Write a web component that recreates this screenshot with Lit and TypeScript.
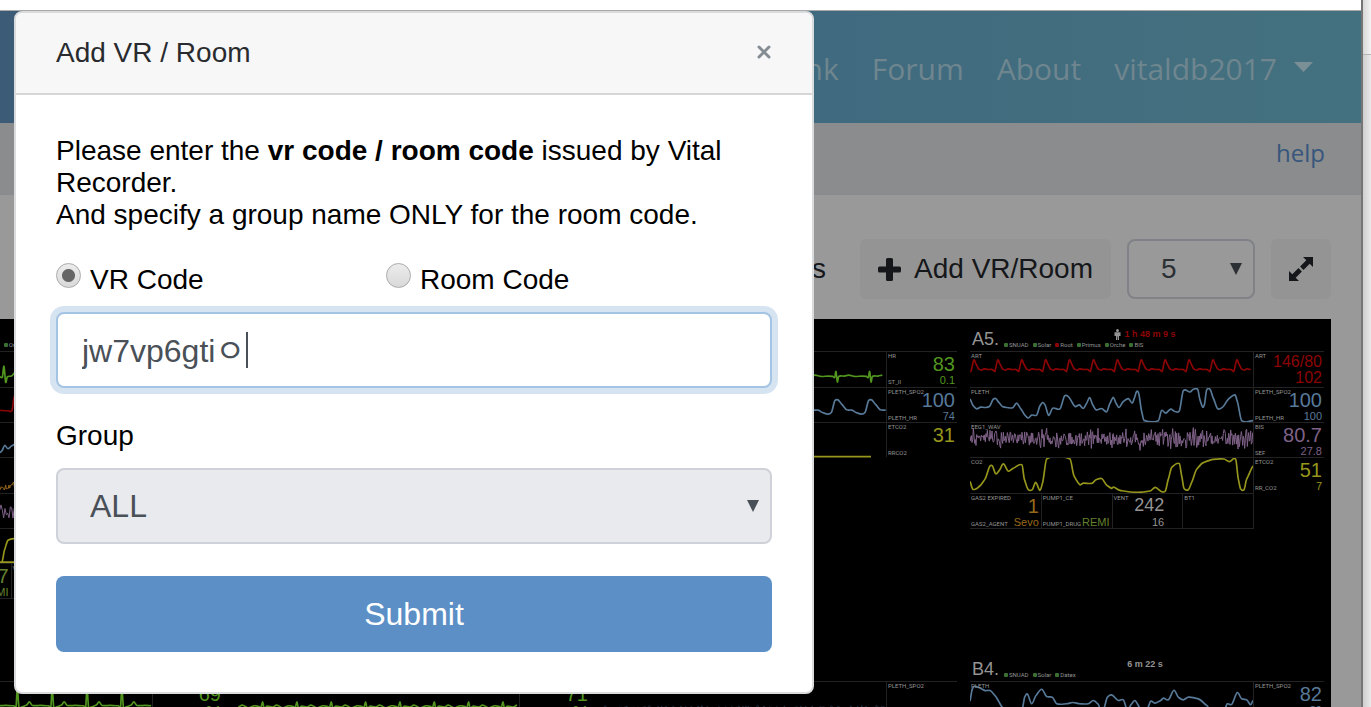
import { LitElement, html, css, svg, nothing } from "lit";
import { customElement, property, state } from "lit/decorators.js";

type Channel = {
  color: string;
  points: string;
  weight?: number;
  label?: string;
  major?: string;
  minor?: string;
  majorLabel?: string;
  minorLabel?: string;
  pair?: boolean;
};
type Cell = { color?: string; top?: string; bottom?: string; major?: string; minor?: string };
type Device = { name: string; down?: boolean };
type Bed = {
  name: string;
  time: string;
  alert?: boolean;
  devices: Device[];
  channels: Channel[];
  cells?: Cell[];
};

const GREEN = "#52961f";
const RED = "#8c0505";
const BLUE = "#587a99";
const PURPLE = "#7f6288";
const YELLOW = "#96961c";
const ORANGE = "#97681a";

/* Waves are plotted on an 849 x 106 grid, three units for each pixel. */
const WAVE_W = 849;

function repeat(start: number, period: number, shape: number[][]): string {
  const out: string[] = [];
  for (let x = start; x < WAVE_W + period; x += period) {
    for (const [dx, y] of shape) {
      const px = x + dx;
      if (px >= 0 && px <= WAVE_W) out.push(`${px},${y}`);
    }
  }
  return out.join(" ");
}

/* Seeded jitter round a mid line, so that every redraw gives the same trace. */
function noise(seed: number, mid: number, amp: number, step: number): string {
  let s = seed;
  const rand = () => {
    s = (s + 0x6d2b79f5) | 0;
    let t = Math.imul(s ^ (s >>> 15), 1 | s);
    t = (t + Math.imul(t ^ (t >>> 7), 61 | t)) ^ t;
    return ((t ^ (t >>> 14)) >>> 0) / 4294967296;
  };
  const out: string[] = [];
  for (let x = 0; x <= WAVE_W; x += step) {
    const r = rand() * 2 - 1;
    out.push(`${x},${Math.round(mid + amp * r * (0.4 + 0.6 * rand()))}`);
  }
  return out.join(" ");
}

/* A smooth curve that passes through every sample. */
function curve(points: string): string {
  const p = points.split(" ").map((s) => s.split(",").map(Number));
  let d = `M${p[0][0]} ${p[0][1]}`;
  for (let i = 0; i < p.length - 1; i++) {
    const a = p[Math.max(i - 1, 0)];
    const b = p[i];
    const c = p[i + 1];
    const e = p[Math.min(i + 2, p.length - 1)];
    const third = (c[0] - b[0]) / 3;
    const slope = (m: number[], n: number[]) => (n[0] === m[0] ? 0 : (n[1] - m[1]) / (n[0] - m[0]));
    const y1 = b[1] + slope(a, c) * third * 0.7;
    const y2 = c[1] - slope(b, e) * third * 0.7;
    d += `C${b[0] + third} ${y1} ${c[0] - third} ${y2} ${c[0]} ${c[1]}`;
  }
  return d;
}

const ART_WAVE = repeat(-60, 71.7, [
  [-9, 59], [0, 24], [7, 38], [15, 52], [24, 55], [30, 51], [42, 53], [54, 53], [61, 58],
]);
const A5_PLETH =
  "0,33 10,54 20,63 32,58 45,59 58,56 70,34 77,32 87,44 97,56 110,59 128,60 140,46 153,64 166,84 175,91 185,82 200,82 210,54 218,44 225,51 236,83 248,61 270,63 284,24 295,26 315,56 328,51 340,62 350,46 359,29 368,51 378,66 395,62 410,72 420,46 430,28 438,46 447,59 460,41 475,32 487,46 493,31 500,10 506,16 515,71 522,98 565,99 575,68 587,76 602,64 615,71 628,69 640,8 660,12 670,4 683,4 690,36 698,58 703,51 710,6 720,4 730,31 743,63 758,58 775,34 795,21 802,41 815,99 849,99";
const A5_CO2 =
  "0,71 8,94 17,94 30,84 45,64 60,24 67,24 77,48 87,39 100,18 115,40 130,31 156,21 163,64 175,96 187,96 197,74 210,98 218,74 230,3 300,3 312,54 330,81 340,76 365,77 378,66 395,62 410,82 425,92 430,88 450,98 500,104 540,100 556,89 575,102 586,100 595,64 605,29 628,17 635,54 642,92 655,96 665,74 680,34 700,14 730,4 762,3 778,11 797,4 805,64 812,94 822,96 830,64 849,24";
const B4_PLETH =
  "0,58 7,21 15,13 30,18 45,26 60,26 75,41 98,78 125,110 150,104 158,77 164,46 172,36 185,66 198,41 215,22 230,44 247,46 260,66 290,66 308,62 330,66 355,66 370,56 385,68 393,90 402,79 412,46 425,39 445,56 460,54 472,84 485,66 495,56 508,76 520,100 534,77 542,58 555,64 572,56 580,49 595,54 612,25 625,46 640,54 655,46 685,51 710,71 730,100 758,100 766,79 772,66 785,68 802,32 815,51 830,54 842,69 849,56";

const DEVICES: Device[] = [
  { name: "SNUAD" }, { name: "Solar" }, { name: "Root", down: true },
  { name: "Primus" }, { name: "Orche" }, { name: "BIS" },
];
const SHORT: Device[] = [{ name: "SNUAD" }, { name: "Solar" }, { name: "Datex" }];

const BEDS: Bed[] = [
  {
    name: "A2.", time: "2 h 11 m 4 s", alert: true, devices: DEVICES,
    channels: [
      { color: GREEN, label: "ECG_II", major: "72", minor: "0.2", majorLabel: "HR", minorLabel: "ST_II",
        points: repeat(-5, 102, [[-10, 75], [-3, 76], [2, 43], [7, 92], [12, 75], [24, 73], [37, 61], [48, 74], [80, 74]]) },
      { color: RED, label: "ART", major: "121/64", minor: "83", majorLabel: "ART", pair: true,
        points: repeat(42, 98.5, [[-7, 68], [0, 25], [10, 44], [22, 58], [40, 64], [60, 68], [80, 69]]) },
      { color: BLUE, label: "PLETH", major: "99", minor: "72", majorLabel: "PLETH_SPO2", minorLabel: "PLETH_HR",
        points: repeat(-5, 100, [[-5, 90], [4, 84], [12, 68], [22, 78], [32, 70], [46, 60], [58, 24], [70, 48], [85, 80]]) },
      { color: ORANGE, label: "EEG", major: "41.2", majorLabel: "BIS", points: noise(7, 87, 14, 2), weight: 3 },
      { color: PURPLE, label: "EEG1_WAV", major: "18.4", majorLabel: "SEF", points: noise(31, 53, 34, 4), weight: 3 },
      { color: YELLOW, label: "CO2", major: "34", minor: "12", majorLabel: "ETCO2", minorLabel: "RR_CO2",
        points: repeat(393, 203, [[-413, 100], [-210, 100], [0, 100], [6, 100], [14, 62], [24, 34], [45, 29], [110, 27], [122, 96], [150, 100]]) },
    ],
    cells: [
      { color: ORANGE, top: "GAS2 EXPIRED", bottom: "GAS2_AGENT", major: "2", minor: "Sevo" },
      { color: "#65802f", top: "PUMP1_CE", bottom: "PUMP1_DRUG", major: "7", minor: "REMI" },
      { top: "VENT", major: "410", minor: "12" },
      { top: "BT1" },
    ],
  },
  { name: "A3.", time: "32 m 5 s", devices: SHORT, channels: [] },
  {
    name: "A4.", time: "1 h 12 m 7 s", alert: true, devices: SHORT,
    channels: [
      { color: GREEN, label: "ECG_II", major: "83", minor: "0.1", majorLabel: "HR", minorLabel: "ST_II",
        points: repeat(-8, 101, [[-10, 74], [-4, 77], [0, 59], [4, 91], [8, 74], [25, 73], [38, 70], [56, 74], [78, 73]]) },
      { color: BLUE, label: "PLETH", major: "100", minor: "74", majorLabel: "PLETH_SPO2", minorLabel: "PLETH_HR",
        points: repeat(-8, 101, [[-25, 79], [-14, 74], [-3, 38], [6, 36], [18, 50], [32, 66], [48, 67], [60, 74]]) },
      { color: YELLOW, label: "CO2", major: "31", majorLabel: "ETCO2", minorLabel: "RRCO2", points: "0,102 804,102" },
    ],
  },
  {
    name: "A5.", time: "1 h 48 m 9 s", alert: true, devices: DEVICES,
    channels: [
      { color: RED, label: "ART", major: "146/80", minor: "102", majorLabel: "ART", pair: true, points: ART_WAVE },
      { color: BLUE, label: "PLETH", major: "100", minor: "100", majorLabel: "PLETH_SPO2", minorLabel: "PLETH_HR", points: A5_PLETH },
      { color: PURPLE, label: "EEG1_WAV", major: "80.7", minor: "27.8", majorLabel: "BIS", minorLabel: "SEF", points: noise(12, 48, 36, 2), weight: 3 },
      { color: YELLOW, label: "CO2", major: "51", minor: "7", majorLabel: "ETCO2", minorLabel: "RR_CO2", points: A5_CO2 },
    ],
    cells: [
      { color: ORANGE, top: "GAS2 EXPIRED", bottom: "GAS2_AGENT", major: "1", minor: "Sevo" },
      { color: "#65802f", top: "PUMP1_CE", bottom: "PUMP1_DRUG", minor: "REMI" },
      { top: "VENT", major: "242", minor: "16" },
      { top: "BT1" },
    ],
  },
  {
    name: "B1.", time: "3 h 2 m 1 s", devices: SHORT,
    channels: [
      { color: GREEN, label: "ECG_II", major: "69", minor: "0.1", majorLabel: "HR", minorLabel: "ST_II",
        points: repeat(27, 104.5, [[-10, 72], [-4, 76], [0, 20], [5, 78], [12, 76], [28, 70], [36, 60], [45, 71], [70, 71], [88, 72]]) },
    ],
  },
  {
    name: "B2.", time: "44 m 8 s", devices: SHORT,
    channels: [
      { color: GREEN, label: "ECG_II", major: "71", minor: "0.1", majorLabel: "HR", minorLabel: "ST_II",
        points: repeat(-23, 103, [[-12, 74], [-5, 76], [0, 60], [4, 78], [14, 73], [30, 76], [42, 70], [60, 78], [78, 72]]) },
    ],
  },
  {
    name: "B3.", time: "18 m 3 s", devices: SHORT,
    channels: [
      { color: "#2e4050", label: "PLETH", majorLabel: "PLETH_SPO2", minorLabel: "PLETH_HR", points: noise(5, 78, 9, 4), weight: 2 },
    ],
  },
  {
    name: "B4.", time: "6 m 22 s", devices: SHORT,
    channels: [
      { color: BLUE, label: "PLETH", major: "82", minor: "89", majorLabel: "PLETH_SPO2", minorLabel: "PLETH_HR", points: B4_PLETH },
    ],
  },
];

@customElement("bed-monitor")
class BedMonitor extends LitElement {
  @property({ attribute: false }) bed!: Bed;

  static styles = css`
    :host { display: block; color: #949494; font-family: "Liberation Sans", Arial, sans-serif; }
    .head {
      display: grid;
      grid-template: 20px 12px / 34px 1fr;
      height: 32px;
    }
    .name { grid-area: 1 / 1 / 3 / 2; align-self: end; padding-left: 2px; font-size: 18px; line-height: 24px; }
    .time {
      grid-area: 1 / 1 / 2 / 3;
      display: flex; align-items: center; justify-content: center; gap: 3px;
      padding: 10px 4px 0 0;
      font-size: 9px; line-height: 11px; font-weight: 700;
    }
    .alert { color: #8c0505; }
    .devices {
      grid-area: 2 / 2;
      display: flex; align-items: center; gap: 4px;
      margin: 0; padding: 0; list-style: none;
      font-family: Roboto, "Liberation Sans", sans-serif;
      font-size: 6px; line-height: 8px;
    }
    .devices li { display: flex; align-items: center; gap: 1px; }
    .dot { width: 4px; height: 4px; border-radius: 1px; background: #3b6e31; }
    .down { background: #8c0505; }
    .row { display: grid; grid-template-columns: 283px 71px; height: 35px; }
    .row:nth-child(3n + 1) { height: 36px; }
    .wave, .values { display: grid; border-top: 1px solid #222; min-height: 0; }
    .values { border-left: 1px solid #222; }
    .wave > *, .values > * { grid-area: 1 / 1; }
    .wave svg { width: 100%; height: 35px; overflow: hidden; }
    .tag {
      padding-left: 1px;
      font-family: Roboto, "Liberation Sans", sans-serif;
      font-size: 6px; line-height: 8px; color: #949494; white-space: nowrap;
    }
    .tags { display: flex; flex-direction: column; justify-content: space-between; height: 34px; }
    .numbers { display: flex; flex-direction: column; align-items: flex-end; padding: 1px 2px 0 0; height: 34px; }
    .major { font-size: 20px; line-height: 22px; }
    .minor { font-size: 11px; line-height: 11px; }
    .pair .major, .pair .minor { font-size: 16px; line-height: 16px; }
    .pair .numbers { padding-top: 2px; }
    .cells {
      display: grid; grid-template-columns: repeat(4, 1fr);
      width: 283px; height: 35px;
      border-bottom: 1px solid #222; border-right: 1px solid #222;
    }
    .cell { display: grid; border-top: 1px solid #222; min-width: 0; }
    .cell > * { grid-area: 1 / 1; }
    .cell + .cell { border-left: 1px solid #222; }
    .cell:nth-child(3) .numbers { padding-right: 18px; }
    .cell:nth-child(3) .major { font-size: 18px; line-height: 20px; padding-bottom: 2px; }
  `;

  private numbers(major?: string, minor?: string, color?: string) {
    return html`<div class="numbers" style=${color ? `color:${color}` : nothing}>
      <span class="major">${major || "\u00a0"}</span><span class="minor">${minor ?? ""}</span>
    </div>`;
  }

  render() {
    const b = this.bed;
    return html`
      <div class="head">
        <span class="name">${b.name}</span>
        <span class="time ${b.alert ? "alert" : ""}">
          ${b.alert
            ? html`<svg width="7" height="11" viewBox="0 0 7 11" aria-hidden="true">
                <circle cx="3.5" cy="1.5" r="1.5" fill="#949494" />
                <path d="M.5 3.200h6v3.800H5V11H3.800V7.500H3.200V11H2V7H.5z" fill="#949494" />
              </svg>`
            : nothing}
          ${b.time}
        </span>
        <ul class="devices">
          ${b.devices.map((d) => html`<li><i class="dot ${d.down ? "down" : ""}"></i>${d.name}</li>`)}
        </ul>
      </div>
      <div>
        ${b.channels.map(
          (c) => html`<div class="row">
            <div class="wave">
              <svg viewBox="0 0 849 106" preserveAspectRatio="none" aria-hidden="true">
                ${c.weight
                  ? svg`<polyline points=${c.points} fill="none" stroke=${c.color} stroke-width=${c.weight} />`
                  : svg`<path d=${curve(c.points)} fill="none" stroke=${c.color} stroke-width="5" stroke-linejoin="round" />`}
              </svg>
              <span class="tag">${c.label}</span>
            </div>
            <div class="values ${c.pair ? "pair" : ""}">
              <div class="tags"><span class="tag">${c.majorLabel}</span><span class="tag">${c.minorLabel}</span></div>
              ${this.numbers(c.major, c.minor, c.color)}
            </div>
          </div>`
        )}
      </div>
      ${b.cells
        ? html`<div class="cells">
            ${b.cells.map(
              (c) => html`<div class="cell">
                <div class="tags"><span class="tag">${c.top}</span><span class="tag">${c.bottom}</span></div>
                ${this.numbers(c.major, c.minor, c.color)}
              </div>`
            )}
          </div>`
        : nothing}
    `;
  }
}

@customElement("app-root")
class AppRoot extends LitElement {
  @state() private mode = "vr";

  static styles = css`
    :host {
      display: block; position: relative; height: 100vh; overflow: hidden;
      font-family: "Liberation Sans", Arial, sans-serif; font-size: 28px; line-height: 32px; color: #000;
    }
    * { box-sizing: border-box; }
    button, input, select { font: inherit; color: inherit; margin: 0; }
    .window { display: grid; grid-template-columns: minmax(0, 1fr) 10px; height: 100%; }
    .page { display: flex; flex-direction: column; min-width: 0; overflow: hidden; background: #999; }
    .chrome { flex: none; height: 11px; background: #fff; border-bottom: 1px solid #a9a9a9; }
    .edge { border-left: 2px solid #757575; background: linear-gradient(90deg, #cfcfcf, #e9e9e9); }
    .edge-top { height: 55px; border-bottom: 1px solid #b5b5b5; background: linear-gradient(90deg, #d8d8d8, #f3f3f3); }

    .nav {
      flex: none; display: flex; align-items: center; justify-content: flex-end; gap: 33px;
      height: 112px; padding: 4px 48px 0 0;
      background: linear-gradient(90deg, #3c5b77, #406a7f 60%, #44717f);
      font-family: "Open Sans", "Noto Sans", sans-serif; font-size: 30px; line-height: 40px;
    }
    .nav a { color: #6f868f; text-decoration: none; }
    .user { display: flex; align-items: center; gap: 17px; }
    .user svg { margin-bottom: 4px; }
    .sub {
      flex: none; display: flex; justify-content: flex-end;
      height: 72px; padding: 14px 36px 0 0; background: #8b8c8e;
      font-family: "Open Sans", "Noto Sans", sans-serif; font-size: 24px;
    }
    .sub a { color: #37567c; text-decoration: none; }

    .tools { flex: none; display: flex; justify-content: flex-end; gap: 16px; padding: 44px 30px 20px 0; }
    .tool {
      display: flex; align-items: center; justify-content: center; gap: 13px;
      height: 60px; padding: 0 18px; border: 0; border-radius: 6px;
      background: #949494; color: #15171a; white-space: nowrap;
    }
    .plain { background: transparent; }
    .pick { position: relative; display: block; }
    .pick svg { position: absolute; right: 13px; top: 50%; margin-top: -6px; pointer-events: none; }
    .pick select {
      appearance: none; display: block; width: 100%;
      padding: 0 32px; border-radius: 8px; outline: 0;
    }
    .count { width: 128px; color: #2c3035; }
    .count select { height: 60px; border: 2px solid #808288; background: #999; }
    .wall {
      flex: 1; display: grid; grid-template-columns: repeat(4, 354px); grid-auto-rows: 330px;
      column-gap: 13px; justify-content: end; min-height: 0; overflow: hidden;
      margin-right: 30px; padding-right: 7px; background: #000;
    }

    .dialog {
      position: absolute; left: 14px; top: 11px; width: 800px; max-width: 100%;
      border: 2px solid #dadbdc; border-radius: 8px; background: #fff; overflow: hidden;
    }
    .dialog header {
      display: flex; align-items: center; justify-content: space-between;
      height: 82px; padding: 0 40px; background: #f7f7f7; border-bottom: 2px solid #d6d6d6;
    }
    h1 { margin: 0; font: inherit; color: #292b2f; }
    .close { display: flex; padding: 0 0 2px; border: 0; background: none; }
    form { padding: 40px; }
    p { margin: 0 0 32px; }
    fieldset { display: flex; margin: 0 0 15px; padding: 0; border: 0; }
    .choice { display: flex; gap: 9px; width: 330px; line-height: 34px; }
    .choice input {
      appearance: none; width: 25px; height: 25px; border: 1px solid #ababab; border-radius: 50%;
      background: linear-gradient(#ececec, #d9d9d9);
    }
    .choice input:checked { background: radial-gradient(circle, #666 0 6px, transparent 7px), linear-gradient(#ececec, #d9d9d9); }
    .code {
      display: block; width: 100%; height: 76px; margin-bottom: 32px; padding: 0 24px 4px;
      border: 2px solid #a3c4e3; border-radius: 8px; outline: 0; box-shadow: 0 0 0 6px #d6e4f2;
      color: #495057; caret-color: transparent;
      font-family: "Liberation Sans", "Noto Sans CJK KR", sans-serif; font-size: 32px;
      background: linear-gradient(#495057, #495057) no-repeat 188px 50% / 2px 36px #fff;
    }
    .label { display: block; margin-bottom: 16px; }
    .group { margin-bottom: 32px; color: #495057; font-size: 32px; }
    .group select { height: 76px; border: 2px solid #ced2d8; background: #e9eaee; opacity: 1; }
    .submit {
      display: block; width: 100%; height: 76px; border: 0; border-radius: 8px;
      background: #5b8fc6; color: #fff; font-size: 32px;
    }
  `;

  private arrow = () =>
    html`<svg width="12" height="12" viewBox="0 0 12 12" aria-hidden="true"><path d="M0 0h12L6 12z" fill="currentColor" /></svg>`;

  render() {
    return html`
      <div class="window">
        <div class="page">
          <div class="chrome"></div>
          <nav class="nav">
            <a href="#">Data Bank</a>
            <a href="#">Forum</a>
            <a href="#">About</a>
            <a href="#" class="user">vitaldb2017
              <svg width="19" height="10" viewBox="0 0 19 10" aria-hidden="true"><path d="M0 0h19L9.500 10z" fill="#7b9096" /></svg>
            </a>
          </nav>
          <div class="sub"><a href="#">help</a></div>
          <div class="tools">
            <button class="tool plain">Groups</button>
            <button class="tool">
              <svg width="23" height="23" viewBox="0 0 23 23" aria-hidden="true">
                <path d="M9.500 0h4a1.500 1.500 0 0 1 1.500 1.500V8.500h6.500A1.500 1.500 0 0 1 23 10v3a1.500 1.500 0 0 1-1.500 1.500H15v7a1.500 1.500 0 0 1-1.500 1.500h-4A1.500 1.500 0 0 1 8 21.500v-7H1.500A1.500 1.500 0 0 1 0 13v-3a1.500 1.500 0 0 1 1.500-1.500H8V1.500A1.500 1.500 0 0 1 9.500 0z" fill="currentColor" />
              </svg>
              Add VR/Room
            </button>
            <label class="pick count">
              <select aria-label="Columns"><option>5</option></select>
              ${this.arrow()}
            </label>
            <button class="tool" aria-label="Full screen">
              <svg width="24" height="24" viewBox="0 0 24 24" aria-hidden="true">
                <path d="M14 0h10v10l-3.300-3.300-6.200 6.200-3.400-3.400 6.200-6.200z" fill="currentColor" />
                <path d="M10 24H0V14l3.300 3.300 6.200-6.200 3.400 3.400-6.200 6.200z" fill="currentColor" />
              </svg>
            </button>
          </div>
          <main class="wall">${BEDS.map((b) => html`<bed-monitor .bed=${b}></bed-monitor>`)}</main>
        </div>
        <div class="edge"><div class="edge-top"></div></div>
      </div>

      <section class="dialog" role="dialog" aria-labelledby="title">
        <header>
          <h1 id="title">Add VR / Room</h1>
          <button class="close" aria-label="Close">
            <svg width="16" height="16" viewBox="0 0 16 16" aria-hidden="true">
              <path d="M3 3l10 10M13 3L3 13" stroke="#868c93" stroke-width="3" stroke-linecap="round" />
            </svg>
          </button>
        </header>
        <form @submit=${(e: Event) => e.preventDefault()}>
          <p>
            Please enter the <b>vr code / room code</b> issued by Vital Recorder.<br />
            And specify a group name ONLY for the room code.
          </p>
          <fieldset>
            <label class="choice">
              <input type="radio" name="mode" .checked=${this.mode === "vr"} @change=${() => (this.mode = "vr")} />VR Code
            </label>
            <label class="choice">
              <input type="radio" name="mode" .checked=${this.mode === "room"} @change=${() => (this.mode = "room")} />Room Code
            </label>
          </fieldset>
          <input class="code" type="text" aria-label="Code" value="jw7vp6gtiㅇ" />
          <label class="label" for="group">Group</label>
          <div class="pick group">
            <select id="group"><option>ALL</option></select>
            ${this.arrow()}
          </div>
          <button class="submit" type="submit">Submit</button>
        </form>
      </section>
    `;
  }
}
